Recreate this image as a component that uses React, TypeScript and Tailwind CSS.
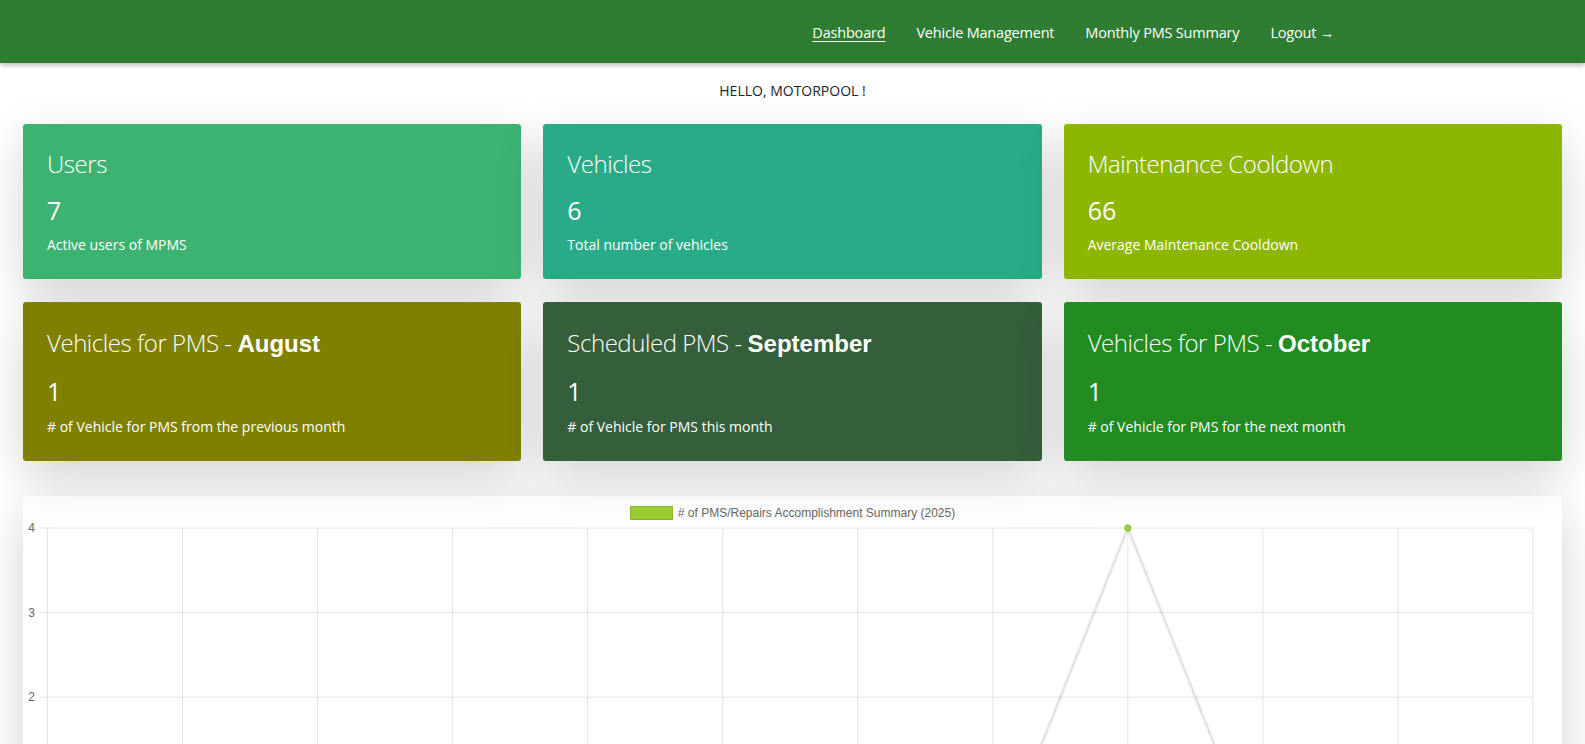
import React from 'react';

const navLinks = [
  { label: 'Dashboard', active: true },
  { label: 'Vehicle Management', active: false },
  { label: 'Monthly PMS Summary', active: false },
  { label: 'Logout →', active: false },
];

type Card = {
  title: string;
  month?: string;
  value: number;
  desc: string;
  bg: string;
};

const topCards: Card[] = [
  { title: 'Users', value: 7, desc: 'Active users of MPMS', bg: 'bg-[#3cb371]' },
  { title: 'Vehicles', value: 6, desc: 'Total number of vehicles', bg: 'bg-[#29ab87]' },
  { title: 'Maintenance Cooldown', value: 66, desc: 'Average Maintenance Cooldown', bg: 'bg-[#8db600]' },
];

const pmsCards: Card[] = [
  { title: 'Vehicles for PMS - ', month: 'August', value: 1, desc: '# of Vehicle for PMS from the previous month', bg: 'bg-[#808000]' },
  { title: 'Scheduled PMS - ', month: 'September', value: 1, desc: '# of Vehicle for PMS this month', bg: 'bg-[#355e3b]' },
  { title: 'Vehicles for PMS - ', month: 'October', value: 1, desc: '# of Vehicle for PMS for the next month', bg: 'bg-[#228b22]' },
];

const months = ['January', 'February', 'March', 'April', 'May', 'June', 'July', 'August', 'September', 'October', 'November', 'December'];
const data = [0, 0, 0, 0, 0, 0, 0, 0, 4, 0, 0, 0];

const StatCard: React.FC<{ card: Card }> = ({ card }) => (
  <div className={`${card.bg} rounded-[3px] px-6 pt-6 pb-[24px] text-white shadow-[0_1rem_3rem_rgba(0,0,0,0.175)]`}>
    <div className={`text-[24px] font-light tracking-[-0.45px] ${card.month ? 'leading-[34px]' : 'leading-[32px]'}`}>
      {card.title}
      {card.month && <b className="font-['Liberation_Sans',Arial,sans-serif] font-bold tracking-normal">{card.month}</b>}
    </div>
    <div className="mt-3 text-[25px] leading-[36px]">{card.value}</div>
    <div className={`text-[14px] leading-[20px] ${card.month ? 'mt-[8px]' : 'mt-[7px]'}`}>{card.desc}</div>
  </div>
);

const LineChart: React.FC = () => {
  const left = 24.5;
  const right = 1510;
  const top = 8;
  const unit = 84.6;
  const zero = top + unit * 4;
  const step = (right - left) / 11;
  const xs = months.map((_, i) => left + i * step);
  const ys = data.map((v) => zero - v * unit);
  const path = xs.map((x, i) => `${i === 0 ? 'M' : 'L'}${x} ${ys[i]}`).join(' ');

  return (
    <svg width="1540" height="400" viewBox="0 0 1540 400" className="block">
      {[4, 3, 2, 1, 0].map((v) => {
        const y = zero - v * unit;
        return (
          <g key={v}>
            <line x1={16} x2={right} y1={y} y2={y} stroke="rgba(0,0,0,0.1)" strokeWidth={1} />
            <text x={12} y={y + 4} textAnchor="end" fontSize="12" fill="#666" fontFamily="Liberation Sans, Arial, sans-serif">
              {v}
            </text>
          </g>
        );
      })}
      {xs.map((x, i) => (
        <g key={i}>
          <line x1={x} x2={x} y1={top} y2={zero + 8} stroke="rgba(0,0,0,0.1)" strokeWidth={1} />
          <text x={x} y={zero + 24} textAnchor="middle" fontSize="12" fill="#666" fontFamily="Liberation Sans, Arial, sans-serif">
            {months[i]}
          </text>
        </g>
      ))}
      <path d={path} fill="none" stroke="rgba(0,0,0,0.1)" strokeWidth={3} strokeLinejoin="miter" />
      {xs.map((x, i) => (
        <circle key={i} cx={x} cy={ys[i]} r={3.5} fill="#9acd32" stroke="rgba(0,0,0,0.08)" strokeWidth={1} />
      ))}
    </svg>
  );
};

const App: React.FC = () => {
  return (
    <div className="min-h-screen bg-white font-['Open_Sans',sans-serif] text-[#212529]">
      <nav className="relative z-10 flex h-[63px] items-center justify-end bg-[#2e7d32] pr-[251px] shadow-[0_2px_5px_rgba(0,0,0,0.3)]">
        <ul className="flex items-center gap-[31px]">
          {navLinks.map((l) => (
            <li key={l.label}>
              <a href="#" className={`text-[14.5px] tracking-[-0.2px] text-white ${l.active ? 'underline underline-offset-[3px]' : ''}`}>
                {l.label}
              </a>
            </li>
          ))}
        </ul>
      </nav>

      <p className="mt-[18px] text-center text-[14px] leading-[20px]">HELLO, MOTORPOOL !</p>

      <div className="px-[23px] pt-[23px]">
        <div className="grid grid-cols-3 gap-x-[22px] gap-y-[23px]">
          {topCards.map((c) => (
            <StatCard key={c.title} card={c} />
          ))}
          {pmsCards.map((c) => (
            <StatCard key={c.month} card={c} />
          ))}
        </div>

        <div className="mt-[35px] rounded-[3px] pt-[10px] shadow-[0_1rem_3rem_rgba(0,0,0,0.175)]">
          <div className="flex items-center justify-center gap-[5px] font-['Liberation_Sans',Arial,sans-serif] text-[12px] leading-[14px] text-[#666]">
            <span className="h-[14px] w-[43px] border-[1.5px] border-[rgba(0,0,0,0.1)] bg-[#9acd32]" />
            <span># of PMS/Repairs Accomplishment Summary (2025)</span>
          </div>
          <LineChart />
        </div>
      </div>
    </div>
  );
};

export default App;
